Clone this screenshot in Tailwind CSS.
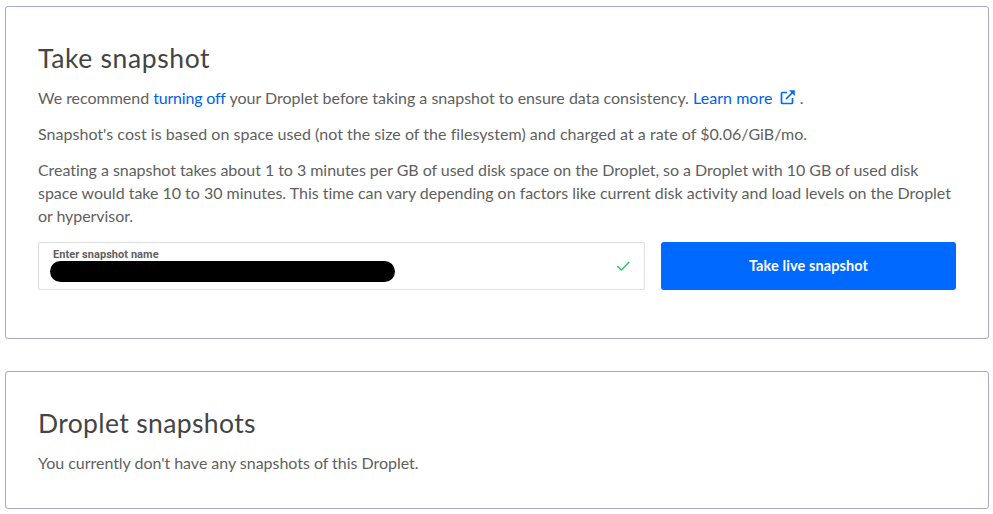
<!DOCTYPE html>
<html lang="en">
<head>
<meta charset="utf-8">
<title>Snapshots</title>
<script src="https://cdn.jsdelivr.net/npm/@tailwindcss/browser@4"></script>
</head>
<body class="bg-white font-['Lato','Liberation_Sans',sans-serif] text-[16px] leading-[23px] text-[#5f5f5f] [font-variant-ligatures:none]">
<main class="flex w-[984px] flex-col gap-8 ml-[5px] pt-1.5">
  <section class="h-[333px] rounded-[3px] border border-[#a3a9c6] px-8 pt-[35px]">
    <h1 class="text-[26.5px] leading-[32px] tracking-[0.62px] text-[#444444]"><span>Take snapshot</span></h1>
    <p class="mt-[12px] flex whitespace-pre"><span class="tracking-[-0.02px]">We recommend </span><a class="tracking-[-0.2px] text-[#0061eb]">turning off</a><span> your Droplet before taking a snapshot to ensure data consistency. </span><a class="flex items-center tracking-[0.05px] text-[#0061eb]">Learn more<svg class="ml-[7px] mb-px size-[15px]" viewBox="0 0 15 15" fill="none" stroke="#0069ff" stroke-width="1.7"><path d="M7 2.5H2.5q-1 0-1 1v9q0 1 1 1h9q1 0 1-1V8M6 9l7-7"/><path d="M9 .2h5.8V6z" fill="#0069ff" stroke="none"/></svg></a><span class="ml-px"> .</span></p>
    <p class="mt-[13px] whitespace-nowrap tracking-[0.03px]"><span>Snapshot's cost is based on space used (not the size of the filesystem) and charged at a rate of $0.06/GiB/mo.</span></p>
    <p class="mt-[13px] flex flex-col items-start whitespace-nowrap"><span class="tracking-[-0.045px]">Creating a snapshot takes about 1 to 3 minutes per GB of used disk space on the Droplet, so a Droplet with 10 GB of used disk</span><span class="tracking-[-0.015px]">space would take 10 to 30 minutes. This time can vary depending on factors like current disk activity and load levels on the Droplet</span><span class="tracking-[-0.07px]">or hypervisor.</span></p>
    <div class="mt-[15px] flex gap-4">
      <div class="flex h-12 w-[607px] items-center justify-between rounded-[2px] border border-[#dfdfdf] pl-[11px] pr-[14px]">
        <div class="flex flex-col self-start pt-[6px]">
          <label class="ml-[3px] font-['Roboto',sans-serif] text-[11px] font-bold leading-[12px] tracking-[0.05px]"><span>Enter snapshot name</span></label>
          <div class="h-[21px] w-[345px] rounded-full bg-black"></div>
        </div>
        <svg class="h-[10px] w-[14px]" viewBox="0 0 14 10" fill="none" stroke="#2fc56d" stroke-width="1.4"><path d="M1.3 5.1 5.3 9.1 13.2 1.1"/></svg>
      </div>
      <button class="h-12 w-[295px] rounded-[3px] bg-[#0069ff] pb-0.5 text-[14.5px] font-bold tracking-[0.1px] text-white"><span>Take live snapshot</span></button>
    </div>
  </section>
  <section class="h-[138px] rounded-[3px] border border-[#a3a9c6] px-8 pt-[35px]">
    <h2 class="text-[26.5px] leading-[32px] tracking-[0.37px] text-[#444444]"><span>Droplet snapshots</span></h2>
    <p class="mt-[12px] tracking-[-0.03px]"><span>You currently don't have any snapshots of this Droplet.</span></p>
  </section>
</main>
</body>
</html>
